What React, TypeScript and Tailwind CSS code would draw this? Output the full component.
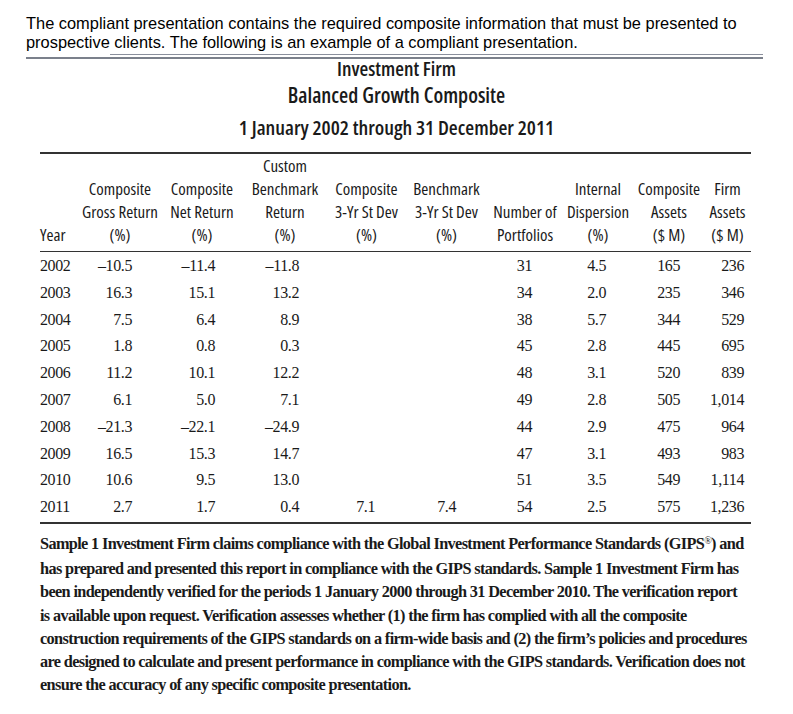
const headers: string[][] = [
  ['Year'],
  ['Composite', 'Gross Return', '(%)'],
  ['Composite', 'Net Return', '(%)'],
  ['Custom', 'Benchmark', 'Return', '(%)'],
  ['Composite', '3-Yr St Dev', '(%)'],
  ['Benchmark', '3-Yr St Dev', '(%)'],
  ['Number of', 'Portfolios'],
  ['Internal', 'Dispersion', '(%)'],
  ['Composite', 'Assets', '($ M)'],
  ['Firm', 'Assets', '($ M)'],
];

// one class per column: where the number sits inside its cell
const cellClass = [
  'text-left',
  'text-right pr-[30px]',
  'text-right pr-[27px]',
  'text-right pr-[29px]',
  'text-right pr-[30px]',
  'text-right pr-[32px]',
  'text-right pr-[30px]',
  'text-right pr-[28px]',
  'text-right pr-[24px]',
  'text-right pr-[7px]',
];

const rows: string[][] = [
  ['2002', '–10.5', '–11.4', '–11.8', '', '', '31', '4.5', '165', '236'],
  ['2003', '16.3', '15.1', '13.2', '', '', '34', '2.0', '235', '346'],
  ['2004', '7.5', '6.4', '8.9', '', '', '38', '5.7', '344', '529'],
  ['2005', '1.8', '0.8', '0.3', '', '', '45', '2.8', '445', '695'],
  ['2006', '11.2', '10.1', '12.2', '', '', '48', '3.1', '520', '839'],
  ['2007', '6.1', '5.0', '7.1', '', '', '49', '2.8', '505', '1,014'],
  ['2008', '–21.3', '–22.1', '–24.9', '', '', '44', '2.9', '475', '964'],
  ['2009', '16.5', '15.3', '14.7', '', '', '47', '3.1', '493', '983'],
  ['2010', '10.6', '9.5', '13.0', '', '', '51', '3.5', '549', '1,114'],
  ['2011', '2.7', '1.7', '0.4', '7.1', '7.4', '54', '2.5', '575', '1,236'],
];

const notes = [
  'has prepared and presented this report in compliance with the GIPS standards. Sample 1 Investment Firm has',
  'been independently verified for the periods 1 January 2000 through 31 December 2010. The verification report',
  'is available upon request. Verification assesses whether (1) the firm has complied with all the composite',
  'construction requirements of the GIPS standards on a firm-wide basis and (2) the firm’s policies and procedures',
  'are designed to calculate and present performance in compliance with the GIPS standards. Verification does not',
  'ensure the accuracy of any specific composite presentation.',
];

const grid = 'grid grid-cols-[38px_84px_80px_86px_77px_83px_74px_72px_70px_47px]';
const narrow = "font-['Open_Sans',sans-serif] font-stretch-[75%]";

export default function App() {
  return (
    <div className="w-[793px] h-[714px] overflow-hidden bg-white text-[#1a1a1a]">
      <div className="pl-[26px] pt-[14px] font-['Liberation_Sans',Arial,sans-serif] text-[16.4px] leading-[19px] text-black">
        <div className="whitespace-nowrap">
          The compliant presentation contains the required composite information that must be presented to
        </div>
        <div className="whitespace-nowrap">
          prospective clients. The following is an example of a compliant presentation.
        </div>
      </div>

      <div className="mt-[2px] ml-[110px] w-[653px] h-px bg-[#8a8f9c]" />
      <div className="mt-[2px] ml-[26px] w-[737px] h-[2px] bg-[#7b808b]" />

      <div className={`${narrow} font-semibold text-center`}>
        <div className="text-[20px] leading-[20px]">Investment Firm</div>
        <div className="mt-[3px] text-[21px] leading-[26px]">Balanced Growth Composite</div>
        <div className="mt-[6px] text-[20.4px] leading-[26px]">1 January 2002 through 31 December 2011</div>
      </div>

      <div className="mt-[12px] ml-[40px] w-[711px]">
        <div className="h-[1.5px] bg-[#333]" />
        <div className={`${grid} ${narrow} font-medium items-end pt-0 pb-[5px] text-[17px] leading-[23px]`}>
          {headers.map((lines, i) => (
            <div key={i} className={i === 0 ? 'flex flex-col items-start' : 'flex flex-col items-center'}>
              {lines.map((line) => (
                <div key={line} className="whitespace-nowrap">
                  {line}
                </div>
              ))}
            </div>
          ))}
        </div>
        <div className="h-[1.5px] bg-[#333]" />
        <div className="pt-[1px] pb-[1.5px] font-['Liberation_Serif',serif] text-[16px] tracking-[-0.4px]">
          {rows.map((row) => (
            <div key={row[0]} className={`${grid} h-[26.8px] leading-[26.8px]`}>
              {row.map((value, i) => (
                <div key={i} className={`${cellClass[i]} whitespace-nowrap`}>
                  {value}
                </div>
              ))}
            </div>
          ))}
        </div>
        <div className="h-[1.5px] bg-[#333]" />
        <div className="pt-[8px] font-['Liberation_Serif',serif] font-bold text-[16.3px] leading-[23.2px] tracking-[-0.65px]">
          <div className="whitespace-nowrap">
            Sample 1 Investment Firm claims compliance with the Global Investment Performance Standards (GIPS
            <span className="relative -top-[5px] text-[10px] font-normal">®</span>) and
          </div>
          {notes.map((line) => (
            <div key={line} className="whitespace-nowrap">
              {line}
            </div>
          ))}
        </div>
      </div>
    </div>
  );
}
